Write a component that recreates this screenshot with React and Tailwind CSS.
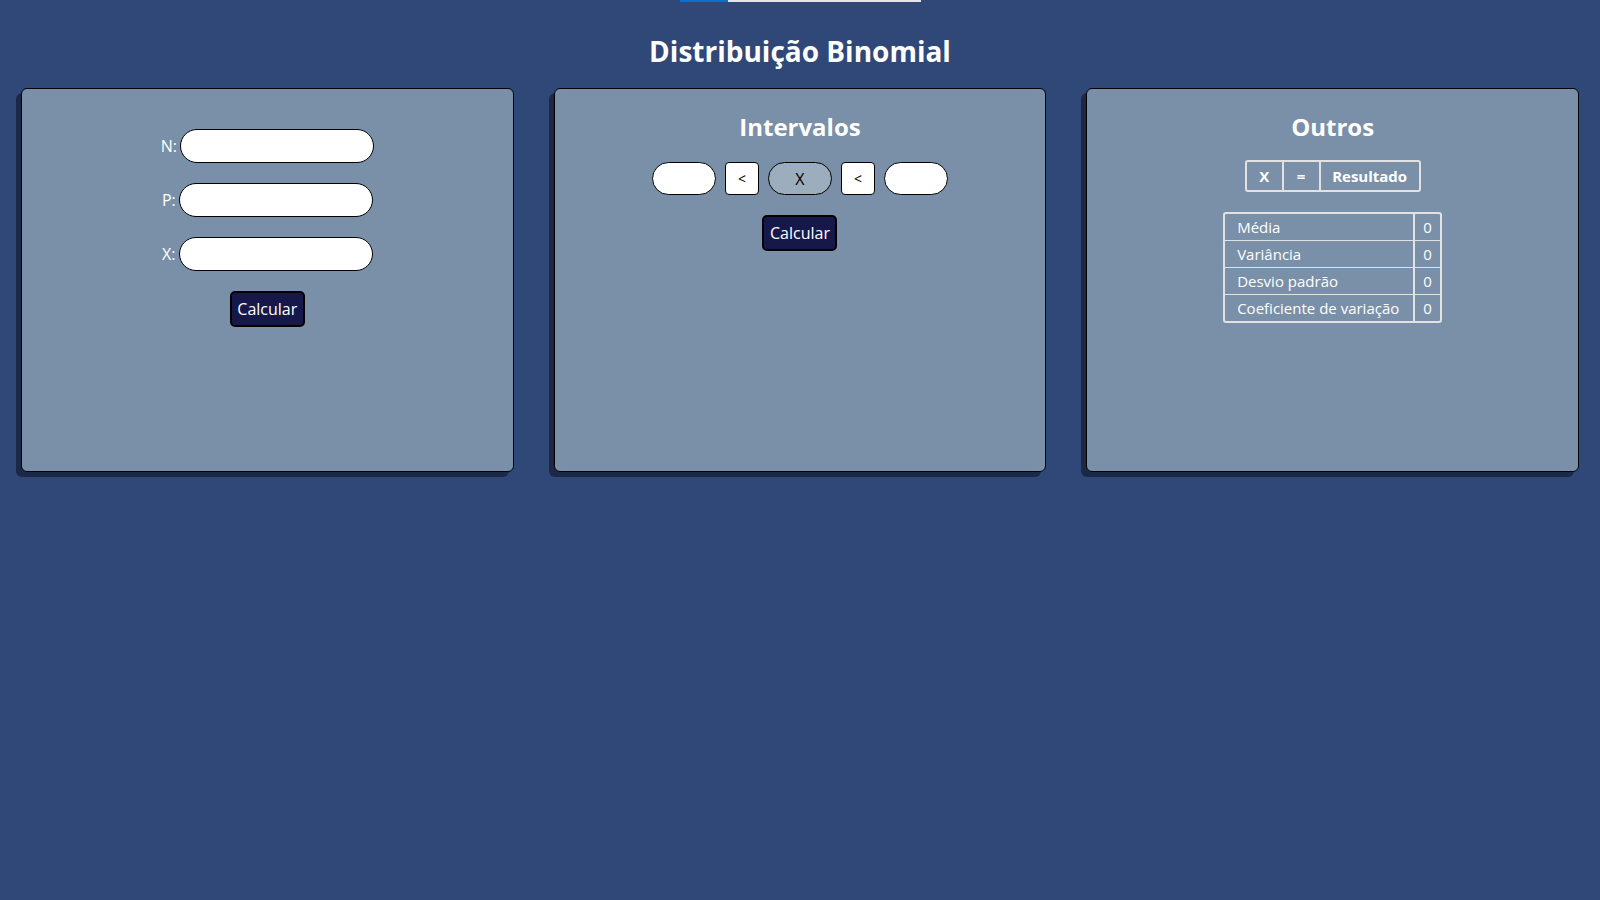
import React from 'react';

const font = { fontFamily: '"Open Sans", "Noto Sans", sans-serif' };

function CalcButton() {
  return (
    <button className="h-[36px] w-[75px] rounded-[5px] border-2 border-black bg-[#17184a] text-[16px] text-white">
      Calcular
    </button>
  );
}

function Field({ label }) {
  return (
    <div className="flex items-center gap-[3px]">
      <span className="text-[16px] text-white">{label}:</span>
      <input className="h-[34px] w-[194px] rounded-full border border-black bg-white px-3 outline-none" />
    </div>
  );
}

function Card({ children }) {
  return (
    <div className="h-[384px] rounded-[6px] border border-black bg-[#7a90a8] shadow-[-5px_5px_0_#1c2847]">
      {children}
    </div>
  );
}

const stats = ['Média', 'Variância', 'Desvio padrão', 'Coeficiente de variação'];

export default function App() {
  return (
    <div className="min-h-screen w-full bg-[#2f4877]" style={font}>
      {/* top strip */}
      <div className="flex pl-[680px]">
        <div className="h-[2px] w-[48px] bg-[#0a6fd0]" />
        <div className="h-[2px] w-[193px] bg-[#e5e5e5]" />
      </div>

      <h1 className="mt-[29px] text-center text-[28px] font-bold leading-[40px] text-white">
        Distribuição Binomial
      </h1>

      <div className="mt-[17px] grid grid-cols-3 gap-[40px] px-[21px]">
        <Card>
          <div className="flex flex-col items-center pt-[40px]">
            <div className="flex flex-col items-center gap-[20px]">
              <Field label="N" />
              <Field label="P" />
              <Field label="X" />
            </div>
            <div className="mt-[20px]">
              <CalcButton />
            </div>
          </div>
        </Card>

        <Card>
          <div className="flex flex-col items-center pt-[22px]">
            <h2 className="text-[24px] font-bold leading-[32px] text-white">Intervalos</h2>
            <div className="mt-[19px] flex items-center gap-[9px]">
              <input className="h-[33px] w-[64px] rounded-full border border-black bg-white px-2 outline-none" />
              <div className="flex h-[33px] w-[34px] items-center justify-center rounded-[4px] border border-black bg-white text-[14px] text-black">&lt;</div>
              <div className="flex h-[33px] w-[64px] items-center justify-center rounded-full border border-black bg-[#9cadbd] text-[16px] text-black">X</div>
              <div className="flex h-[33px] w-[34px] items-center justify-center rounded-[4px] border border-black bg-white text-[14px] text-black">&lt;</div>
              <input className="h-[33px] w-[64px] rounded-full border border-black bg-white px-2 outline-none" />
            </div>
            <div className="mt-[20px]">
              <CalcButton />
            </div>
          </div>
        </Card>

        <Card>
          <div className="flex flex-col items-center pt-[22px]">
            <h2 className="text-[24px] font-bold leading-[32px] text-white">Outros</h2>
            <div className="mt-[17px] flex h-[32px] overflow-hidden rounded-[3px] border-2 border-[#e2e2e2] text-[15px] font-bold text-white">
              <div className="flex w-[37px] items-center justify-center border-r-2 border-[#e2e2e2]">X</div>
              <div className="flex w-[37px] items-center justify-center border-r-2 border-[#e2e2e2]">=</div>
              <div className="flex w-[98px] items-center justify-center">Resultado</div>
            </div>
            <div className="mt-[20px] overflow-hidden rounded-[3px] border-2 border-[#e2e2e2] text-[15px] text-white">
              {stats.map((s, i) => (
                <div key={s} className={i > 0 ? 'flex h-[27px] border-t border-[#e2e2e2]' : 'flex h-[26px]'}>
                  <div className="flex w-[190px] items-center border-r-2 border-[#e2e2e2] pl-[12px]">{s}</div>
                  <div className="flex w-[25px] items-center justify-center">0</div>
                </div>
              ))}
            </div>
          </div>
        </Card>
      </div>
    </div>
  );
}
